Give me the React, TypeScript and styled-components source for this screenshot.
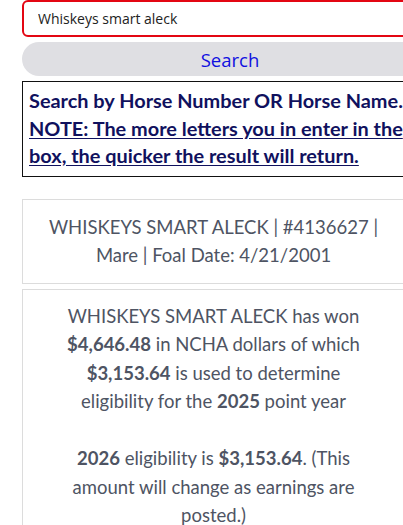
import React from "react";
import styled, { createGlobalStyle } from "styled-components";

const Global = createGlobalStyle`
  html, body { margin: 0; padding: 0; background: #ffffff; }
  body { overflow: hidden; }
`;

const Page = styled.div`
  width: 416px;
  padding-left: 22px;
  display: flex;
  flex-direction: column;
`;

const SearchInput = styled.input`
  box-sizing: border-box;
  width: 416px;
  height: 37px;
  border: 2px solid #e30613;
  border-radius: 6px;
  padding: 0 14px;
  font-family: "Open Sans", "Liberation Sans", sans-serif;
  font-size: 14px;
  color: #222;
  outline: none;
  background: #fff;
`;

const SearchButton = styled.button`
  margin-top: 5px;
  width: 416px;
  height: 34px;
  border: none;
  border-radius: 17px;
  background: #dfdfe3;
  color: #1010e0;
  font-family: "Open Sans", "Liberation Sans", sans-serif;
  font-size: 18.5px;
  padding: 0;
  cursor: pointer;
`;

const NoteBox = styled.div`
  box-sizing: border-box;
  margin-top: 5px;
  width: 416px;
  border: 1px solid #111;
  padding: 5px 6px 6px;
  font-family: "Lato", "Liberation Sans", sans-serif;
  font-weight: 700;
  font-size: 19.9px;
  line-height: 27.5px;
  color: #10115e;
  white-space: nowrap;
`;

const Underlined = styled.span`
  text-decoration: underline;
  text-underline-offset: 2px;
`;

const Card = styled.div<{ $first?: boolean }>`
  box-sizing: border-box;
  margin-top: ${(p) => (p.$first ? 22 : 5)}px;
  width: 383px;
  border: 1px solid #dcdcdc;
  padding: ${(p) => (p.$first ? "13px 20px 13px" : "12px 30px 0")};
  font-family: "Lato", "Liberation Sans", sans-serif;
  font-size: 18.5px;
  line-height: 28.5px;
  color: #4e5463;
  text-align: center;
`;

const Para = styled.p`
  margin: 0 0 28.5px;
`;

export default function App() {
  return (
    <>
      <Global />
      <Page>
        <SearchInput defaultValue="Whiskeys smart aleck" />
        <SearchButton>Search</SearchButton>
        <NoteBox>
          Search by Horse Number OR Horse Name.
          <br />
          <Underlined>NOTE: The more letters you in enter in the</Underlined>
          <br />
          <Underlined>box, the quicker the result will return.</Underlined>
        </NoteBox>
        <Card $first>
          WHISKEYS SMART ALECK | #4136627 | Mare | Foal Date: 4/21/2001
        </Card>
        <Card>
          <Para>
            WHISKEYS SMART ALECK has won <b>$4,646.48</b> in NCHA dollars of
            which <b>$3,153.64</b> is used to determine eligibility for the{" "}
            <b>2025</b> point year
          </Para>
          <Para>
            <b>2026</b> eligibility is <b>$3,153.64</b>. (This amount will
            change as earnings are posted.)
          </Para>
        </Card>
      </Page>
    </>
  );
}
